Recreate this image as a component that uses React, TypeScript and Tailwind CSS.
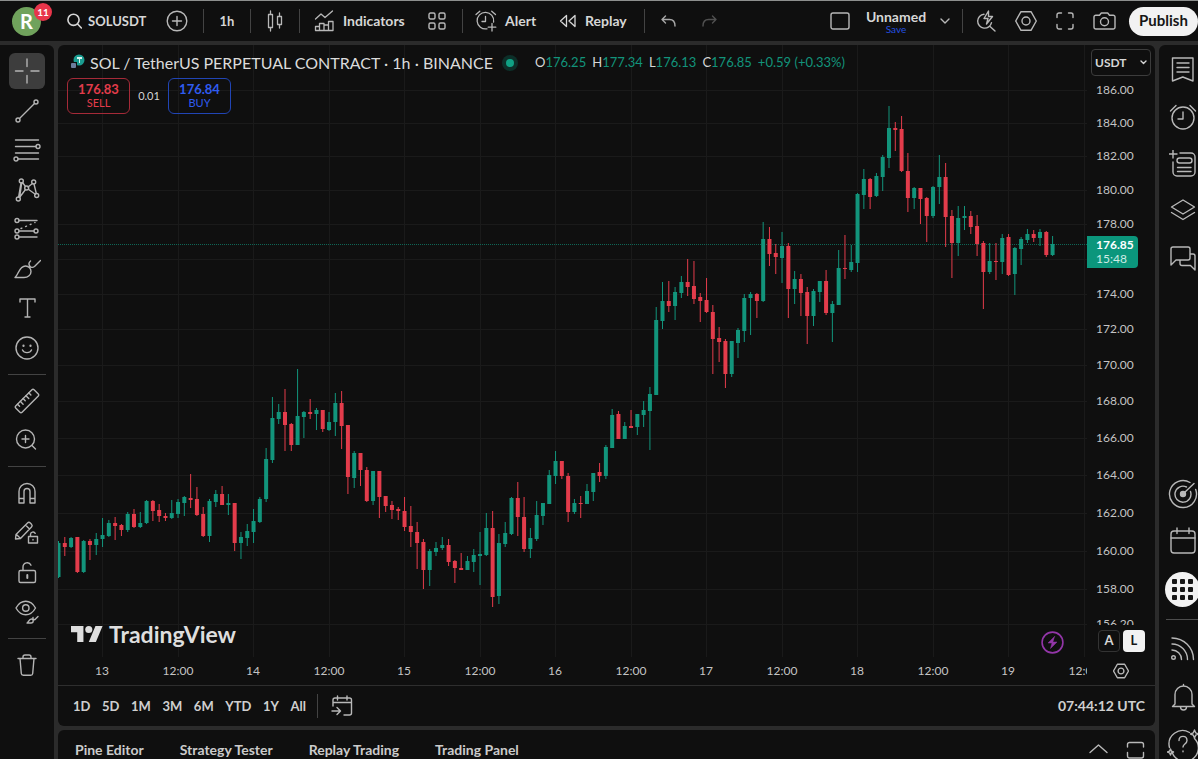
import type { ReactNode } from "react";

type Candle = [dir: "g" | "r", high: number, top: number, bottom: number, low: number];

const UP = "#12947b";
const DOWN = "#e33c4b";
const STEP = 151 / 24;
const ORIGIN = { x: 58, y: 45 };

// hourly candles, in canvas units
const CANDLES: Candle[] = [
  ["g", 541, 543, 577, 578], ["r", 537, 543, 547, 556], ["g", 537, 538, 547, 548], ["r", 537, 537, 572, 573],
  ["g", 540, 541, 572, 573], ["r", 539, 541, 545, 560], ["g", 533, 539, 545, 555], ["g", 518, 535, 539, 547],
  ["g", 520, 523, 536, 537], ["r", 517, 523, 526, 540], ["r", 524, 525, 530, 536], ["g", 512, 514, 530, 532],
  ["r", 509, 514, 527, 528], ["g", 512, 523, 527, 528], ["g", 500, 501, 523, 524], ["r", 500, 501, 511, 521],
  ["r", 504, 510, 516, 522], ["r", 513, 516, 518, 521], ["g", 500, 513, 518, 519], ["g", 499, 502, 514, 518],
  ["g", 496, 497, 503, 516], ["r", 474, 498, 500, 508], ["r", 487, 499, 515, 516], ["r", 507, 514, 536, 537],
  ["g", 499, 501, 536, 542], ["g", 490, 494, 502, 507], ["r", 486, 494, 505, 505], ["g", 494, 503, 505, 515],
  ["r", 503, 503, 543, 551], ["g", 532, 537, 543, 559], ["g", 524, 531, 538, 546], ["g", 509, 521, 532, 543],
  ["g", 497, 499, 522, 523], ["g", 448, 459, 499, 502], ["g", 397, 418, 460, 463], ["g", 404, 412, 419, 424],
  ["r", 389, 412, 425, 451], ["r", 423, 424, 445, 451], ["g", 369, 416, 445, 445], ["g", 411, 412, 417, 438],
  ["r", 399, 412, 414, 419], ["g", 408, 410, 414, 430], ["r", 410, 410, 429, 432], ["g", 412, 422, 430, 431],
  ["g", 393, 403, 422, 436], ["r", 391, 403, 426, 449], ["r", 425, 425, 477, 494], ["g", 451, 453, 478, 488],
  ["r", 453, 453, 470, 486], ["r", 467, 470, 501, 502], ["g", 471, 471, 501, 505], ["r", 471, 471, 497, 518],
  ["r", 496, 496, 506, 512], ["r", 501, 505, 510, 519], ["r", 507, 509, 511, 520], ["r", 497, 511, 527, 531],
  ["r", 506, 526, 532, 547], ["r", 522, 532, 543, 569], ["r", 539, 542, 570, 589], ["g", 549, 551, 570, 586],
  ["g", 542, 548, 552, 556], ["g", 537, 545, 548, 550], ["r", 539, 545, 562, 566], ["r", 560, 561, 568, 583],
  ["r", 553, 568, 570, 570], ["g", 556, 561, 570, 570], ["g", 549, 555, 562, 572], ["g", 532, 554, 556, 585],
  ["g", 513, 528, 555, 556], ["r", 511, 528, 597, 607], ["g", 534, 543, 596, 604], ["g", 522, 533, 544, 547],
  ["g", 497, 498, 534, 535], ["r", 482, 498, 517, 536], ["r", 497, 517, 549, 552], ["g", 528, 538, 549, 558],
  ["g", 501, 515, 539, 541], ["g", 503, 503, 516, 525], ["g", 470, 475, 504, 504], ["g", 451, 461, 476, 484],
  ["r", 461, 461, 476, 479], ["r", 473, 476, 512, 522], ["g", 499, 503, 512, 514], ["r", 496, 503, 504, 518],
  ["g", 484, 491, 504, 504], ["g", 473, 473, 492, 501], ["r", 463, 472, 476, 482], ["g", 445, 447, 476, 479],
  ["g", 409, 415, 448, 448], ["r", 411, 414, 439, 439], ["g", 422, 426, 439, 439], ["r", 410, 426, 428, 428],
  ["g", 414, 414, 427, 435], ["g", 401, 410, 415, 427], ["g", 387, 394, 411, 450], ["g", 307, 320, 395, 395],
  ["g", 282, 301, 321, 329], ["r", 281, 301, 306, 312], ["g", 287, 292, 306, 320], ["g", 276, 282, 293, 298],
  ["r", 259, 282, 287, 296], ["r", 261, 286, 299, 304], ["r", 293, 297, 301, 322], ["r", 278, 300, 312, 313],
  ["r", 305, 312, 339, 374], ["r", 327, 338, 342, 362], ["r", 339, 341, 374, 388], ["g", 341, 341, 374, 377],
  ["g", 328, 330, 343, 358], ["g", 294, 298, 331, 342], ["g", 292, 294, 298, 335], ["r", 293, 294, 301, 318],
  ["g", 222, 239, 301, 302], ["r", 227, 239, 254, 266], ["r", 244, 253, 257, 274], ["g", 232, 246, 258, 283],
  ["r", 243, 246, 289, 318], ["g", 271, 279, 289, 304], ["r", 274, 279, 293, 316], ["r", 287, 292, 316, 344],
  ["g", 289, 291, 316, 326], ["g", 281, 281, 292, 302], ["r", 270, 281, 313, 315], ["g", 301, 304, 313, 342],
  ["g", 250, 268, 305, 305], ["r", 235, 268, 269, 279], ["g", 245, 262, 270, 272], ["g", 193, 194, 263, 272],
  ["g", 169, 179, 195, 209], ["r", 178, 179, 197, 209], ["g", 173, 176, 196, 197], ["g", 155, 157, 177, 191],
  ["g", 106, 128, 158, 168], ["r", 122, 128, 130, 151], ["r", 116, 129, 171, 172], ["r", 153, 171, 198, 212],
  ["g", 187, 188, 198, 209], ["r", 188, 188, 199, 224], ["r", 197, 198, 216, 242], ["g", 186, 187, 216, 218],
  ["g", 155, 177, 187, 204], ["r", 163, 177, 217, 247], ["r", 210, 216, 243, 278], ["g", 206, 218, 243, 256],
  ["g", 206, 216, 218, 230], ["r", 211, 216, 227, 234], ["r", 215, 226, 244, 256], ["r", 241, 243, 272, 309],
  ["g", 243, 261, 272, 274], ["r", 243, 261, 262, 280], ["g", 234, 238, 262, 274], ["r", 234, 237, 275, 276],
  ["g", 247, 248, 274, 295], ["g", 237, 239, 249, 265], ["g", 229, 234, 240, 243], ["r", 230, 234, 238, 242],
  ["g", 229, 232, 238, 246], ["r", 231, 232, 255, 257], ["g", 236, 244, 255, 256],
];

const PRICES = [186, 184, 182, 180, 178, 176, 174, 172, 170, 168, 166, 164, 162, 160, 158, 156.2];
const TIMES = ["13", "12:00", "14", "12:00", "15", "12:00", "16", "12:00", "17", "12:00", "18", "12:00", "19", "12:00"];

// logarithmic price scale
const priceY = (price: number) => Math.round(45 + 3058.6 * Math.log(186 / price));
const timeX = (index: number) => Math.round(44 + index * 12 * STEP);

function Icon({ w = 28, h = 28, sw = 1.4, children }: { w?: number; h?: number; sw?: number; children: ReactNode }) {
  return (
    <svg
      width={w}
      height={h}
      viewBox={`0 0 ${w} ${h}`}
      fill="none"
      stroke="currentColor"
      strokeWidth={sw}
      strokeLinecap="round"
      strokeLinejoin="round"
      className="shrink-0"
      aria-hidden
    >
      {children}
    </svg>
  );
}

function ToolButton({ label, active, children }: { label: string; active?: boolean; children: ReactNode }) {
  return (
    <button
      aria-label={label}
      className={`flex h-9 w-9 items-center justify-center rounded-md ${active ? "bg-[#3d3d3d]" : ""}`}
    >
      {children}
    </button>
  );
}

function Divider() {
  return <div className="h-6 w-px shrink-0 bg-[#434343]" />;
}

function HexIcon({ size = 22 }: { size?: number }) {
  return (
    <svg width={size} height={size} viewBox="0 0 22 22" fill="none" stroke="currentColor" strokeWidth={size > 18 ? 1.4 : 1.9} aria-hidden>
      <path d="M6 1.7h10l5.3 9.3L16 20.3H6L.7 11z" strokeLinejoin="round" />
      <circle cx="11" cy="11" r="4" />
    </svg>
  );
}

function TopBar() {
  return (
    <header className="flex h-[41px] shrink-0 items-center overflow-hidden border-t border-[#8d8f8e] bg-[#0f0f0f] text-sm font-bold text-[#d6d6d6]">
      <button aria-label="Account, 11 notifications" className="relative ml-3 flex h-[29px] w-[29px] shrink-0 items-center justify-center rounded-full bg-[#70a25c] text-xl font-bold text-white">
        R
        <span className="absolute -top-1 left-[22px] flex h-[18px] w-[18px] items-center justify-center rounded-full bg-[#e8354a] text-[10px] leading-none">
          11
        </span>
      </button>
      <button className="ml-[26px] flex w-[86px] shrink-0 items-center gap-[6px] text-[13px]">
        <Icon w={15} h={16} sw={1.6}>
          <circle cx="6.5" cy="6.8" r="5.6" />
          <path d="M10.6 11l3.8 4" />
        </Icon>
        SOLUSDT
      </button>
      <button aria-label="Compare symbol" className="ml-[13px] shrink-0 text-[#b8b8b8]">
        <Icon w={22} h={22}>
          <circle cx="11" cy="11" r="9.8" />
          <path d="M11 6.5v9M6.5 11h9" />
        </Icon>
      </button>
      <div className="ml-[15px] flex items-center">
        <Divider />
      </div>
      <button className="w-[46px] shrink-0 text-center text-[13px]">1h</button>
      <Divider />
      <button aria-label="Chart type" className="flex w-12 shrink-0 items-center justify-center text-[#b8b8b8]">
        <Icon w={18} h={22} sw={1.3}>
          <path d="M4.5 1v3.5M4.5 17.5V21M2.5 4.5h4v13h-4zM13.5 3v3.5M13.5 14.5V18M11.5 6.5h4v8h-4z" />
        </Icon>
      </button>
      <Divider />
      <button className="ml-[14px] flex w-[94px] shrink-0 items-center gap-2">
        <span className="text-[#b8b8b8]">
          <Icon w={21} h={22} sw={1.3}>
            <path d="M1.5 9l5.5-5 4 3.5 7.5-6.5M1.5 20.5v-4h4v4zM5.5 20.5v-7h4.5v7zM10 20.5v-5.5h4.5v5.5zM14.5 20.5v-9h4.5v9zM1.5 20.5h17.5" />
          </Icon>
        </span>
        Indicators
      </button>
      <button aria-label="Layout templates" className="ml-5 mr-4 shrink-0 text-[#b8b8b8]">
        <Icon w={18} h={18}>
          <rect x="1" y="1" width="6" height="6" rx="1.5" />
          <rect x="11" y="1" width="6" height="6" rx="1.5" />
          <rect x="1" y="11" width="6" height="6" rx="1.5" />
          <rect x="11" y="11" width="6" height="6" rx="1.5" />
        </Icon>
      </button>
      <Divider />
      <button className="ml-3 flex w-[62px] shrink-0 items-center gap-2">
        <span className="text-[#b8b8b8]">
          <Icon w={22} h={22} sw={1.3}>
            <path d="M18.6 12A8.3 8.3 0 1 0 12 18.8M10.5 6.5v5h-3.5M1 4.5L4.8 1.2M20.5 4.5l-3.8-3.3M17 13.5v7.5M13.2 17.2h7.6" />
          </Icon>
        </span>
        Alert
      </button>
      <button className="ml-[22px] flex w-[70px] shrink-0 items-center gap-2">
        <Icon w={18} h={14} sw={1.3}>
          <path d="M7.5 1.5v11L1.5 7zM16 1.5v11L10 7z" />
        </Icon>
        Replay
      </button>
      <div className="ml-[15px]">
        <Divider />
      </div>
      <button aria-label="Undo" className="ml-4 shrink-0 text-[#a8a8a8]">
        <Icon w={15} h={12}>
          <path d="M4.5 1L1 4.5 4.5 8M1 4.5h7.5c3.5 0 5.5 2.5 5.5 6.5" />
        </Icon>
      </button>
      <button aria-label="Redo" className="ml-[26px] shrink-0 text-[#505050]">
        <Icon w={15} h={12}>
          <path d="M10.5 1L14 4.5 10.5 8M14 4.5H6.5C3 4.5 1 7 1 11" />
        </Icon>
      </button>

      <div className="ml-auto flex shrink-0 items-center">
        <button aria-label="Layout setup" className="text-[#b8b8b8]">
          <Icon w={20} h={20}>
            <rect x="1" y="2" width="18" height="16" rx="2" />
          </Icon>
        </button>
        <button className="ml-[14px] flex w-[64px] flex-col items-center leading-none">
          <span className="text-sm leading-[15px]">Unnamed</span>
          <span className="text-[10px] font-normal leading-[10px] text-[#2450e0]">Save</span>
        </button>
        <button aria-label="Manage layouts" className="ml-3 mr-3 text-[#b8b8b8]">
          <Icon w={10} h={6}>
            <path d="M1 1l4 4 4-4" />
          </Icon>
        </button>
        <Divider />
        <div className="flex items-center gap-[19px] px-[13px] text-[#b8b8b8]">
          <button aria-label="Quick search">
            <Icon w={20} h={22}>
              <path d="M8 4.2a7 7 0 1 0 7.5 8.5M13.5 16l5.500 5M12.5 1L8 8.5h4L10.5 14 16.5 6.5h-4z" />
            </Icon>
          </button>
          <button aria-label="Chart settings">
            <HexIcon />
          </button>
          <button aria-label="Fullscreen">
            <Icon w={18} h={18}>
              <path d="M1 5.5V3a2 2 0 0 1 2-2h2.5M12.5 1H15a2 2 0 0 1 2 2v2.5M17 12.5V15a2 2 0 0 1-2 2h-2.5M5.5 17H3a2 2 0 0 1-2-2v-2.5" />
            </Icon>
          </button>
          <button aria-label="Take a snapshot">
            <Icon w={23} h={18}>
              <path d="M1 5a1.8 1.8 0 0 1 1.8-1.8h3.7L8.3 1h6.4l1.8 2.200h3.7A1.8 1.8 0 0 1 22 5v10.2a1.8 1.8 0 0 1-1.8 1.8H2.8A1.8 1.8 0 0 1 1 15.2z" />
              <circle cx="11.5" cy="9.8" r="4" />
            </Icon>
          </button>
        </div>
        <button className="h-[29px] w-[69px] rounded-full bg-[#f2f2f2] text-[15px] text-[#161616]">Publish</button>
      </div>
    </header>
  );
}

function DrawingToolbar() {
  return (
    <nav aria-label="Drawing tools" className="flex w-[54px] shrink-0 flex-col items-center overflow-hidden rounded-tr-md bg-[#0f0f0f] pt-2 text-[#b4b4b4]">
      <div className="flex h-[313px] shrink-0 flex-col justify-between">
        <ToolButton label="Cross" active>
          <Icon>
            <path d="M14 2v7.5M14 18.5V26M2.5 14h7.5M18 14h8" />
          </Icon>
        </ToolButton>
        <ToolButton label="Trend line">
          <Icon>
            <circle cx="23" cy="5" r="2" />
            <circle cx="5" cy="23" r="2" />
            <path d="M6.5 21.5l15-15" />
          </Icon>
        </ToolButton>
        <ToolButton label="Fib retracement">
          <Icon>
            <path d="M2.5 4h23M2.5 10.5h20.5M2.5 17h23M5 23h20.5" />
            <circle cx="25" cy="10.5" r="2" />
            <circle cx="3" cy="23" r="2" />
          </Icon>
        </ToolButton>
        <ToolButton label="XABCD pattern">
          <Icon>
            <path d="M5.6 21L8 7M9.5 6.5l3 4M15 11l4.5-3.5M21 8l2.3 9.5M15.3 13.3l7 5M12.5 13.5l-6 8M8.7 7l-2 14" />
            <circle cx="8.3" cy="5" r="2" />
            <circle cx="20.7" cy="6" r="2" />
            <circle cx="13.7" cy="12" r="2" />
            <circle cx="5.3" cy="23" r="2" />
            <circle cx="23.7" cy="19.5" r="2" />
          </Icon>
        </ToolButton>
        <ToolButton label="Long position">
          <Icon>
            <path d="M6 5.5h18M6 16h15M6 22h18" />
            <path d="M8 13.5l14-6" strokeDasharray="1 4" />
            <circle cx="4" cy="5.5" r="2" />
            <circle cx="4" cy="16" r="2" />
            <circle cx="23" cy="16" r="2" />
            <circle cx="4" cy="22" r="2" />
          </Icon>
        </ToolButton>
        <ToolButton label="Brush">
          <Icon>
            <path d="M2 22.5c3.5-2.5 4-11.5 10.5-11.5 3.5 0 5.5 2.8 5.5 5.5 0 3.5-3 6-7 6zM17.5 6c-3.5 3 0 8.5 4 5.5L27.5 5.5" />
          </Icon>
        </ToolButton>
        <ToolButton label="Text">
          <Icon>
            <path d="M7 8V5h15v3M14.5 5v18M12 23h5" />
          </Icon>
        </ToolButton>
        <ToolButton label="Icon">
          <Icon>
            <circle cx="14" cy="14" r="11" />
            <path d="M9.5 16c1.5 3.5 7.5 3.5 9 0" />
            <path d="M10.5 11.5v.5M17.5 11.5v.5" strokeWidth="2.2" />
          </Icon>
        </ToolButton>
      </div>
      <div className="my-2 h-px w-[38px] shrink-0 bg-[#434343]" />
      <div className="flex shrink-0 flex-col gap-[3px]">
        <ToolButton label="Measure">
          <Icon>
            <g transform="rotate(-45 14 14)">
              <rect x="1" y="9.5" width="26" height="9" rx="1.5" />
              <path d="M5 9.5v3M9 9.5v4M13 9.5v3M17 9.5v4M21 9.5v3" />
            </g>
          </Icon>
        </ToolButton>
        <ToolButton label="Zoom in">
          <Icon>
            <circle cx="12.5" cy="13" r="9" />
            <path d="M19 19.5l3.5 3.5M12.5 9.5v7M9 13h7" />
          </Icon>
        </ToolButton>
      </div>
      <div className="my-2 h-px w-[38px] shrink-0 bg-[#434343]" />
      <div className="flex h-[155px] shrink-0 flex-col justify-between">
        <ToolButton label="Magnet mode">
          <Icon>
            <path d="M6 24V12.5a8 8 0 0 1 16 0V24h-5V12.5a3 3 0 0 0-6 0V24zM6 19.5h5M17 19.5h5" />
          </Icon>
        </ToolButton>
        <ToolButton label="Stay in drawing mode">
          <Icon>
            <path d="M3 15.5L14.5 4a2 2 0 0 1 2.8 0l1.2 1.2a2 2 0 0 1 0 2.8L7.5 19.5 2.5 20zM12.5 6l4 4M3.5 15.5l4 4" />
            <path d="M15.5 17.5h9V24h-9zM17.5 17.5v-2a2.5 2.5 0 0 1 4.7-1.2M20 20.5v.6" />
          </Icon>
        </ToolButton>
        <ToolButton label="Lock all drawings">
          <Icon>
            <rect x="6" y="12.5" width="16.5" height="12" rx="1.5" />
            <path d="M10 12.5V9a4.2 4.2 0 0 1 8-1.8" />
            <path d="M14.3 17v3" strokeWidth="2" />
          </Icon>
        </ToolButton>
        <ToolButton label="Hide all drawings">
          <Icon>
            <path d="M3 10c5-9 14.5-9 19.5 0-5 9-14.5 9-19.5 0z" />
            <circle cx="12.8" cy="10" r="3.2" />
            <path d="M14 25c1.5-.8 2-4 4.5-4 2.2 0 2.5 4-.5 4zM20 19.5c-.5 2 1.5 3 2.5 1.5l2.5-2.5" />
          </Icon>
        </ToolButton>
      </div>
      <div className="my-2 h-px w-[38px] shrink-0 bg-[#434343]" />
      <ToolButton label="Remove objects">
        <Icon>
          <path d="M5 7.5h18M10 7.5V6a2 2 0 0 1 2-2h4a2 2 0 0 1 2 2v1.5M7 7.5l1.3 15a2 2 0 0 0 2 1.8h7.4a2 2 0 0 0 2-1.8l1.3-15" />
        </Icon>
      </ToolButton>
    </nav>
  );
}

function Plot() {
  return (
    <svg className="absolute inset-0 h-full w-full" role="img" aria-label="SOL / TetherUS hourly candles">
      {PRICES.map((price) => (
        <line key={price} x1="0" x2="100%" y1={priceY(price) + 0.5} y2={priceY(price) + 0.5} stroke="#1a1a1a" />
      ))}
      {TIMES.map((_, i) => (
        <line key={i} x1={timeX(i) + 0.5} x2={timeX(i) + 0.5} y1="0" y2="100%" stroke="#1a1a1a" />
      ))}
      <line x1="0" x2="100%" y1="199.5" y2="199.5" stroke="#0e6655" strokeDasharray="1 1" />
      <g transform={`translate(${-ORIGIN.x} ${-ORIGIN.y})`}>
        {CANDLES.map(([dir, high, top, bottom, low], i) => {
          const x = 58.5 + i * STEP;
          const color = dir === "g" ? UP : DOWN;
          return (
            <g key={i} fill={color}>
              <rect x={x - 0.5} y={high} width="1" height={low - high} />
              <rect x={x - 2} y={top} width="4" height={bottom - top} />
            </g>
          );
        })}
      </g>
    </svg>
  );
}

function Legend() {
  const values = [
    ["O", "176.25"],
    ["H", "177.34"],
    ["L", "176.13"],
    ["C", "176.85"],
  ];
  return (
    <div className="absolute left-[9px] top-2 whitespace-nowrap">
      <div className="flex h-[19px] items-center">
        <svg width="19" height="18" viewBox="0 0 19 18" aria-hidden>
          <circle cx="12" cy="6" r="5.5" fill="#1a9c90" />
          <path d="M10 3h5v2h-2v4h-1V5h-2z" fill="#d8f3ee" />
          <rect x="4" y="8" width="6" height="7" fill="#0f0f0f" />
          <rect x="4" y="9" width="5" height="5" rx="1" fill="#6d7d9c" />
        </svg>
        <h1 className="ml-1 w-[412px] text-base text-[#dbdbdb]">
          SOL / TetherUS PERPETUAL CONTRACT · 1h · BINANCE
        </h1>
        <span className="flex h-4 w-4 items-center justify-center rounded-full bg-[#0d2f29]">
          <span className="h-2 w-2 rounded-full bg-[#10a184]" />
        </span>
        <div className="ml-[17px] flex gap-[6px] text-[13px] text-[#12947b]">
          {values.map(([name, value]) => (
            <span key={name}>
              <span className="text-[#d6d6d6]">{name}</span>
              {value}
            </span>
          ))}
          <span>+0.59 (+0.33%)</span>
        </div>
      </div>
      <div className="mt-[6px] flex items-center text-xs leading-[14px]">
        <button className="h-9 w-[63px] rounded-md border border-[#a52a38] text-[#e33c4b]">
          <span className="block text-[13px] font-bold">176.83</span>
          <span className="block text-[11px]">SELL</span>
        </button>
        <span className="w-[38px] text-center text-[11px] text-[#d6d6d6]">0.01</span>
        <button className="h-9 w-[63px] rounded-md border border-[#2145b5] text-[#2f5cf0]">
          <span className="block text-[13px] font-bold">176.84</span>
          <span className="block text-[11px]">BUY</span>
        </button>
      </div>
    </div>
  );
}

function Brand() {
  return (
    <a href="#tradingview" className="absolute bottom-2 left-[13px] flex items-center gap-[6px] text-[#dedede]">
      <svg width="32" height="16" viewBox="0 4 36 18" fill="currentColor" aria-hidden>
        <path d="M14 22H7V11H0V4h14v18zM28 22h-8l7.5-18h8L28 22z" />
        <circle cx="20" cy="8" r="4" />
      </svg>
      <span className="text-[23px] font-bold leading-[30px]">TradingView</span>
    </a>
  );
}

function PriceAxis() {
  return (
    <div className="relative flex w-[68px] shrink-0 flex-col">
      <svg className="min-h-0 w-full flex-1" aria-hidden>
        {PRICES.filter((price) => price !== 176).map((price) => (
          <text key={price} x="9" y={priceY(price) + 4} fill="#c4c4c4" className="text-xs">
            {price.toFixed(2)}
          </text>
        ))}
      </svg>
      <div className="absolute left-1 top-1 flex h-[27px] w-[60px] items-center rounded border border-[#3c3c3c] bg-[#0f0f0f] text-[#d6d6d6]">
        <select aria-label="Currency" className="h-full w-full appearance-none bg-transparent pl-[3px] text-xs font-bold">
          <option>USDT</option>
        </select>
        <span className="pointer-events-none absolute right-[3px]">
          <Icon w={7} h={5}>
            <path d="M1 1l2.5 2.5L6 1" />
          </Icon>
        </span>
      </div>
      <div className="absolute left-0 top-[191px] w-[51px] rounded-r-sm bg-[#0b967c] py-[2px] pl-[9px] text-xs leading-[14px] text-white">
        <div className="font-bold">176.85</div>
        <div className="text-[#cdebe4]">15:48</div>
      </div>
      <div className="flex h-8 shrink-0 items-center gap-[3px] pl-[11px] text-[13px] font-bold">
        <button className="h-[22px] w-[22px] rounded border border-[#333] text-[#d6d6d6]">A</button>
        <button className="h-[22px] w-[22px] rounded bg-[#f2f2f2] text-[#161616]">L</button>
      </div>
    </div>
  );
}

function ChartPanel() {
  return (
    <section className="flex min-h-0 flex-1 flex-col overflow-hidden rounded-md bg-[#0f0f0f]">
      <div className="flex min-h-0 flex-1">
        <div className="relative min-w-0 flex-1 overflow-hidden">
          <Plot />
          <Legend />
          <Brand />
          <button aria-label="Latest news" className="absolute bottom-[3px] right-[23px] text-[#9336a8]">
            <Icon w={23} h={23} sw={1.6}>
              <circle cx="11.5" cy="11.5" r="10.4" />
              <path d="M13.5 5.5L7 12h4l-1.500 5.500L16 11h-4z" fill="currentColor" strokeWidth=".5" />
            </Icon>
          </button>
        </div>
        <PriceAxis />
      </div>
      <div className="flex h-7 shrink-0">
        <svg className="min-w-0 flex-1" aria-hidden>
          {TIMES.map((time, i) => (
            <text key={i} x={timeX(i)} y="18" textAnchor="middle" fill="#c4c4c4" className="text-xs">
              {time}
            </text>
          ))}
        </svg>
        <button aria-label="Axis settings" className="flex w-[68px] shrink-0 items-center justify-center text-[#b8b8b8]">
          <HexIcon size={16} />
        </button>
      </div>
      <div className="flex h-[41px] shrink-0 items-center border-t border-[#2e2e2e] pl-[15px] pr-[10px] text-sm font-bold text-[#cfcfcf]">
        <div className="flex w-[233px] items-center justify-between">
          {["1D", "5D", "1M", "3M", "6M", "YTD", "1Y", "All"].map((range) => (
            <button key={range} className="text-[13px]">
              {range}
            </button>
          ))}
        </div>
        <div className="ml-[11px] mr-[13px]">
          <Divider />
        </div>
        <button aria-label="Go to date" className="text-[#b8b8b8]">
          <Icon w={22} h={22}>
            <path d="M2 11V5a2 2 0 0 1 2-2h14.5a2 2 0 0 1 2 2v13a2 2 0 0 1-2 2H13M2 7.5h18.5M6.5 1v4M16 1v4M1 16h8M6 12.5L9.5 16 6 19.5" />
          </Icon>
        </button>
        <button className="ml-auto text-sm">07:44:12 UTC</button>
      </div>
    </section>
  );
}

function BottomTabs() {
  return (
    <footer className="flex h-[29px] shrink-0 items-end overflow-hidden rounded-t-md bg-[#0f0f0f] pl-[17px] pr-[10px] text-sm font-bold text-[#cbcbcb]">
      <div className="flex gap-9">
        {["Pine Editor", "Strategy Tester", "Replay Trading", "Trading Panel"].map((tab) => (
          <button key={tab} className="leading-[19px]">
            {tab}
          </button>
        ))}
      </div>
      <div className="ml-auto flex items-end gap-[18px] text-[#b8b8b8]">
        <button aria-label="Open panel" className="pb-[5px]">
          <Icon w={19} h={11}>
            <path d="M1 9.5L9.5 2 18 9.5" />
          </Icon>
        </button>
        <button aria-label="Maximize panel">
          <Icon w={19} h={18}>
            <path d="M1.5 6V3.5a2 2 0 0 1 2-2h12a2 2 0 0 1 2 2V6M17.5 11.5V15a2 2 0 0 1-2 2h-12a2 2 0 0 1-2-2v-3.5" />
          </Icon>
        </button>
      </div>
    </footer>
  );
}

function SideButton({ label, children }: { label: string; children: ReactNode }) {
  return (
    <button aria-label={label} className="flex h-[47px] w-[47px] shrink-0 items-center justify-center">
      {children}
    </button>
  );
}

function SideBar() {
  return (
    <aside className="flex w-[39px] shrink-0 flex-col justify-between overflow-hidden rounded-tl-md bg-[#0f0f0f] text-[#b8b8b8]">
      <div className="flex flex-col pt-px">
        <SideButton label="Watchlist">
          <Icon>
            <path d="M3.5 2h20.5v23l-10.2-4L3.5 25zM8 7h12M8 11.5h12M8 16h12" />
          </Icon>
        </SideButton>
        <SideButton label="Alerts">
          <Icon>
            <circle cx="14" cy="15" r="11" />
            <path d="M14 9v7H9M1.5 8L7 2.5M26.5 8L21 2.5" />
          </Icon>
        </SideButton>
        <SideButton label="Data window">
          <Icon>
            <path d="M4 12v10a4 4 0 0 0 4 4h14a4 4 0 0 0 4-4V7a4 4 0 0 0-4-4H11M4 0v8M0 4h8M8.5 17.5h13.5M8.5 21.5h13.5" />
            <rect x="8" y="8" width="15" height="5" rx="2.5" />
          </Icon>
        </SideButton>
        <SideButton label="Object tree">
          <Icon>
            <path d="M2.5 10L14 3l11.5 7L14 17zM2.5 15.5L14 22.5l11.5-7" />
          </Icon>
        </SideButton>
        <SideButton label="Chats">
          <Icon>
            <path d="M2 21V5a2 2 0 0 1 2-2h15a2 2 0 0 1 2 2v9a2 2 0 0 1-2 2H7zM21 10h3a2 2 0 0 1 2 2v14l-4.5-4.5H13a2 2 0 0 1-2-2V16" />
          </Icon>
        </SideButton>
      </div>
      <div className="-mb-2 flex flex-col">
        <SideButton label="Screener">
          <Icon w={30} h={30}>
            <path d="M27.7 10.5A13.5 13.5 0 1 1 22 3.5M22.5 12.5A8 8 0 1 1 18.5 8M15.5 14.5L26 4.5" />
            <circle cx="15" cy="15" r="2.5" fill="currentColor" />
          </Icon>
        </SideButton>
        <SideButton label="Calendar">
          <Icon>
            <rect x="2" y="4" width="24" height="22" rx="3" />
            <path d="M2 11h24M8 1v5.5M20 1v5.5" />
          </Icon>
        </SideButton>
        <div className="pt-[2px]">
          <SideButton label="Products">
            <span className="grid h-[35px] w-[35px] grid-cols-[5px_5px_5px] place-content-center gap-[3px] rounded-full bg-[#f2f2f2]">
              {Array.from({ length: 9 }, (_, i) => (
                <span key={i} className="h-[5px] w-[5px] rounded-[1px] bg-[#161616]" />
              ))}
            </span>
          </SideButton>
        </div>
        <div className="my-[6px] ml-[7px] h-px w-[32px] bg-[#4d4d4d]" />
        <SideButton label="News">
          <Icon>
            <circle cx="4.5" cy="21.5" r="1.8" />
            <path d="M3 14a9.5 9.5 0 0 1 9.5 9.5M3 8a15.5 15.5 0 0 1 15.5 15.5M3 2a21.5 21.5 0 0 1 21.5 21.5" />
          </Icon>
        </SideButton>
        <SideButton label="Notifications">
          <Icon>
            <path d="M14.5 1.5v1.5M6 21v-9.5a8.5 8.5 0 0 1 17 0V21l2.5 2.5h-22zM11.5 24a3 3 0 0 0 6 0" />
          </Icon>
        </SideButton>
        <SideButton label="Help">
          <Icon w={32} h={30}>
            <path d="M27.5 9.5A13.5 13.5 0 1 1 5 23M2.5 18.5A13.5 13.5 0 0 1 22.5 3.5M12 11.5c0-5.5 8-5.5 8 0 0 3.5-4 3.5-4 6.5M16 22v.8" />
            <path d="M27.5 1l1.2 2.8L31.5 5l-2.8 1.2L27.5 9l-1.2-2.8L23.5 5l2.8-1.2zM3.5 20l.9 2.1 2.1.9-2.1.9-.9 2.1-.9-2.1-2.1-.9 2.1-.9z" />
          </Icon>
        </SideButton>
      </div>
    </aside>
  );
}

export default function App() {
  return (
    <div className="flex h-screen flex-col overflow-hidden bg-[#2b2b2b] font-['Trebuchet_MS',Lato,sans-serif]">
      <TopBar />
      <div className="flex min-h-0 flex-1 gap-1 pt-1">
        <DrawingToolbar />
        <main className="flex min-w-0 flex-1 flex-col gap-1">
          <ChartPanel />
          <BottomTabs />
        </main>
        <SideBar />
      </div>
    </div>
  );
}
